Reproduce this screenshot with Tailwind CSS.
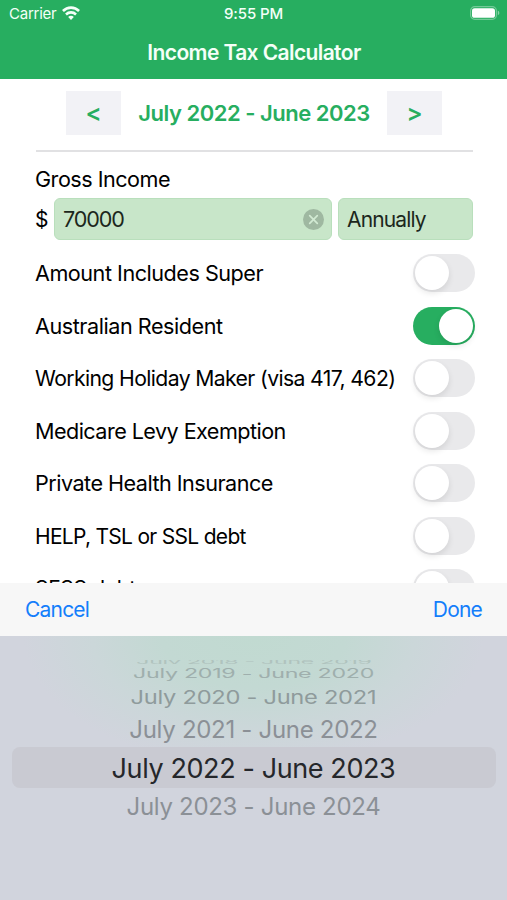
<!DOCTYPE html>
<html lang="en">
<head>
<meta charset="utf-8">
<title>Income Tax Calculator</title>
<script src="https://cdn.jsdelivr.net/npm/@tailwindcss/browser@4"></script>
</head>
<body class="bg-white">
<div class="flex h-[900px] w-[507px] flex-col overflow-hidden bg-white font-['Inter','Liberation_Sans',sans-serif] text-black">
  <header class="h-[79px] shrink-0 bg-[#27ae60] text-[#f4fff8]">
    <div class="grid h-[27px] grid-cols-3 items-center pl-[9px] pr-[7px]">
      <div class="flex items-center gap-[6px]">
        <span class="pt-px text-[15px] tracking-[-0.25px]">Carrier</span>
        <svg class="-mt-px h-[14px] w-[18px]" viewBox="0 0 19 14" preserveAspectRatio="none" fill="none" stroke="currentColor"><path d="M1 5.1C5.8.5 13.2.5 18 5.1" stroke-width="2.8"/><path d="M4.2 8.400c3-2.800 7.600-2.800 10.600 0" stroke-width="2.700"/><path d="M9.500 14 6.500 10.900c1.700-1.500 4.300-1.500 6 0Z" fill="currentColor" stroke="none"/></svg>
      </div>
      <div class="-ml-[2px] pt-[2px] text-center text-[15px] font-medium tracking-[-0.1px]">9:55 PM</div>
      <svg class="-mt-px h-[14px] w-[31px] justify-self-end" viewBox="0 0 31 14"><rect x="1.600" y=".6" width="25.800" height="12.800" rx="4.200" fill="none" stroke="#fff" stroke-opacity=".35" stroke-width="1.200"/><rect x="3" y="2.200" width="23" height="9.600" rx="2.600" fill="#fff"/><path d="M28.800 4.800c2 .6 2 3.800 0 4.400Z" fill="#fff" fill-opacity=".45"/></svg>
    </div>
    <h1 class="pl-px pt-[11px] text-center text-[21px] font-semibold leading-[30px] tracking-[-0.6px]">Income Tax Calculator</h1>
  </header>

  <main class="h-[504px] shrink-0 overflow-hidden pl-[35px] pr-[32px]">
    <div class="ml-px mr-[2px] flex h-[73px] items-start border-b-[2px] border-[#e1e1e3] pl-[30px] pr-[31px] pt-[12px] text-[#27ae60]">
      <button class="h-[44px] w-[55px] bg-[#f2f2f6] text-[24px] font-semibold leading-[44px]">&lt;</button>
      <div class="flex-1 whitespace-nowrap text-center text-[22px] font-semibold leading-[45px] tracking-[-0.5px]">July 2022 - June 2023</div>
      <button class="h-[44px] w-[55px] bg-[#f2f2f6] text-[24px] font-semibold leading-[44px]">&gt;</button>
    </div>
    <div class="pt-[12px] text-[21.6px] leading-[30px] tracking-[-0.5px]">Gross Income</div>
    <div class="mr-[2px] mt-[4px] flex h-[42px] items-center text-[21.6px] tracking-[-1.1px]">
      <span class="w-[19px] pt-px text-[21px]">$</span>
      <div class="flex h-[42px] w-[278px] items-center justify-between rounded-[6px] border border-[#b9dfbc] bg-[#c8e6c9] pl-[8px] pr-[7px] text-[#1c271c]">
        <span class="pt-px">70000</span>
        <svg class="size-[21px]" viewBox="0 0 21 21"><circle cx="10.500" cy="10.500" r="10.500" fill="#9fb8a1"/><path d="m6.700 6.700 7.600 7.600m0-7.600-7.600 7.600" stroke="#d2ead3" stroke-width="1.700" stroke-linecap="round"/></svg>
      </div>
      <div class="ml-[6px] flex h-[42px] flex-1 items-center rounded-[6px] border border-[#b9dfbc] bg-[#c8e6c9] pl-[8px] pt-px text-[21px] tracking-[-0.85px] text-[#1c271c]">Annually</div>
    </div>
    <div class="mt-[7px] text-[21.6px] [&>div]:flex [&>div]:h-[52.5px] [&>div]:items-center [&>div]:justify-between [&>div]:whitespace-nowrap">
      <div><span class="tracking-[-0.48px]">Amount Includes Super</span><i class="flex h-[38px] w-[62px] items-center rounded-full bg-[#e9e9eb] pl-[2px]"><b class="size-[34px] rounded-full bg-white shadow-[0_3px_6px_rgba(0,0,0,0.1)]"></b></i></div>
      <div><span class="tracking-[-0.45px]">Australian Resident</span><i class="flex h-[38px] w-[62px] items-center justify-end rounded-full bg-[#27ae60] pr-[2px]"><b class="size-[34px] rounded-full bg-white shadow-[0_3px_6px_rgba(0,0,0,0.1)]"></b></i></div>
      <div><span class="pt-[2px] text-[21.2px] tracking-[-0.62px]">Working Holiday Maker (visa 417, 462)</span><i class="flex h-[38px] w-[62px] items-center rounded-full bg-[#e9e9eb] pl-[2px]"><b class="size-[34px] rounded-full bg-white shadow-[0_3px_6px_rgba(0,0,0,0.1)]"></b></i></div>
      <div><span class="tracking-[-0.55px]">Medicare Levy Exemption</span><i class="flex h-[38px] w-[62px] items-center rounded-full bg-[#e9e9eb] pl-[2px]"><b class="size-[34px] rounded-full bg-white shadow-[0_3px_6px_rgba(0,0,0,0.1)]"></b></i></div>
      <div><span class="tracking-[-0.52px]">Private Health Insurance</span><i class="flex h-[38px] w-[62px] items-center rounded-full bg-[#e9e9eb] pl-[2px]"><b class="size-[34px] rounded-full bg-white shadow-[0_3px_6px_rgba(0,0,0,0.1)]"></b></i></div>
      <div><span class="pt-[2px] text-[21px] tracking-[-0.7px]">HELP, TSL or SSL debt</span><i class="flex h-[38px] w-[62px] items-center rounded-full bg-[#e9e9eb] pl-[2px]"><b class="size-[34px] rounded-full bg-white shadow-[0_3px_6px_rgba(0,0,0,0.1)]"></b></i></div>
      <div><span class="text-[21px] tracking-[-0.3px]">SFSS debt</span><i class="flex h-[38px] w-[62px] items-center rounded-full bg-[#e9e9eb] pl-[2px]"><b class="size-[34px] rounded-full bg-white shadow-[0_3px_6px_rgba(0,0,0,0.1)]"></b></i></div>
    </div>
  </main>

  <div class="flex h-[53px] shrink-0 items-center justify-between bg-[#f7f7f7] pl-[25px] pr-[25px] text-[21px] tracking-[-0.8px] text-[#147efb]">
    <button>Cancel</button><button>Done</button>
  </div>

  <section class="flex flex-1 flex-col items-center whitespace-nowrap bg-[#d1d4dd] bg-[radial-gradient(ellipse_230px_130px_at_50%_0,#c1dad1_0%,#c3d9d3_40%,#cbd7d9_70%,#d1d4dd_100%)] pt-[24px] text-[24px] tracking-[-0.3px] text-[#8b9096]">
    <div class="flex h-[4px] w-full items-center justify-center overflow-hidden text-[#b0c3be]"><span class="scale-x-[0.965] scale-y-[0.28]">July 2018 - June 2019</span></div>
    <div class="flex h-[19px] items-center text-[#9fafad]"><span class="scale-x-[0.967] scale-y-[0.52]">July 2019 - June 2020</span></div>
    <div class="flex h-[30px] items-center text-[#8f9b9c]"><span class="scale-x-[0.987] scale-y-[0.78]">July 2020 - June 2021</span></div>
    <div class="flex h-[34px] items-center">July 2021 - June 2022</div>
    <div class="flex h-[41px] w-[484px] items-center justify-center rounded-[8px] bg-[#c9cad2] pt-[3px] text-[27px] tracking-[-0.4px] text-[#25272b]">July 2022 - June 2023</div>
    <div class="flex h-[38px] items-center">July 2023 - June 2024</div>
  </section>
</div>
</body>
</html>
